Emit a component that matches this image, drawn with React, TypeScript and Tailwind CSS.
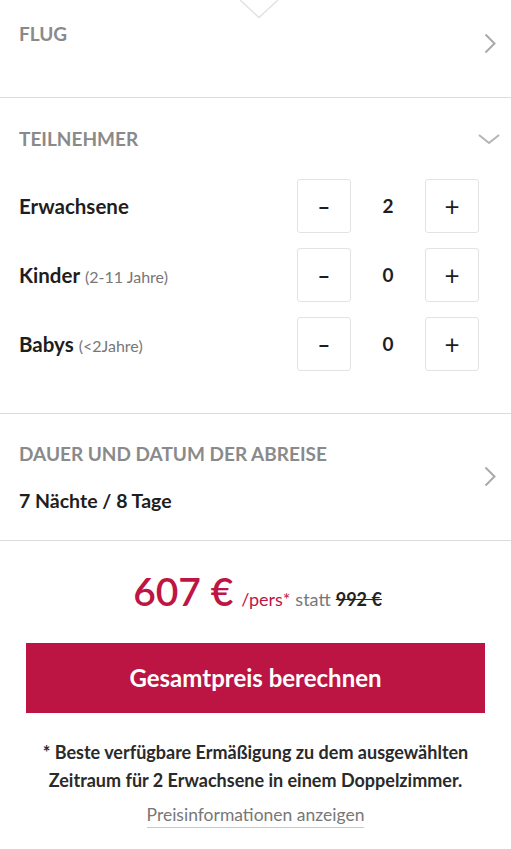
import React from "react";

const ChevronRight = () => (
  <svg width="12" height="21" viewBox="0 0 12 21" fill="none">
    <polyline points="1.5,1.5 10.5,10.5 1.5,19.5" stroke="#aaaaaa" strokeWidth="2" />
  </svg>
);

const ChevronDown = () => (
  <svg width="22" height="10" viewBox="0 0 22 10" fill="none">
    <polyline points="1,1 11,9 21,1" stroke="#b5b5b5" strokeWidth="2" />
  </svg>
);

const Counter = ({ label, sub, value }: { label: string; sub?: string; value: number }) => (
  <div className="flex items-center justify-between h-[54px]">
    <div className="text-[20.5px] font-bold text-[#1e1e1e]">
      {label}
      {sub && <span className="ml-[5px] text-[16px] font-normal text-[#777]">{sub}</span>}
    </div>
    <div className="flex items-center mr-[13px]">
      <button className="w-[54px] h-[54px] border border-[#e3e3e3] rounded-[3px] bg-white flex items-center justify-center text-[22px] font-bold text-[#1e1e1e]">
        –
      </button>
      <div className="w-[74px] text-center text-[19px] font-bold text-[#1e1e1e]">{value}</div>
      <button className="w-[54px] h-[54px] border border-[#e3e3e3] rounded-[3px] bg-white flex items-center justify-center text-[26px] font-normal text-[#1e1e1e]">
        +
      </button>
    </div>
  </div>
);

export default function App() {
  return (
    <div className="w-[511px] bg-white" style={{ fontFamily: "Lato, 'Noto Sans', sans-serif" }}>
      {/* FLUG */}
      <div className="relative h-[98px] border-b border-[#dcdcdc] pl-[19px] pr-[15px]">
        <svg className="absolute left-[239px] top-0" width="40" height="19" viewBox="0 0 40 19" fill="none">
          <polyline points="1,0 20,17.5 39,0" stroke="#e2e2e2" strokeWidth="1.5" />
        </svg>
        <div className="pt-[21px] text-[19px] font-bold text-[#8a8a8a] leading-[26px]">FLUG</div>
        <div className="absolute right-[15px] top-[33px]">
          <ChevronRight />
        </div>
      </div>

      {/* TEILNEHMER */}
      <div className="relative border-b border-[#dcdcdc] pl-[19px] pr-[19px] pt-[28px] pb-[42px]">
        <div className="flex items-center justify-between">
          <div className="text-[19px] font-bold text-[#8a8a8a] leading-[26px]">TEILNEHMER</div>
          <div className="-mr-[8px] -mt-[1px]">
            <ChevronDown />
          </div>
        </div>
        <div className="mt-[27px] flex flex-col gap-[15px]">
          <Counter label="Erwachsene" value={2} />
          <Counter label="Kinder" sub="(2-11 Jahre)" value={0} />
          <Counter label="Babys" sub="(<2Jahre)" value={0} />
        </div>
      </div>

      {/* DAUER */}
      <div className="relative h-[127px] border-b border-[#dcdcdc] pl-[19px] pr-[15px] pt-[27px]">
        <div className="text-[19px] font-bold text-[#8a8a8a] leading-[26px]">DAUER UND DATUM DER ABREISE</div>
        <div className="mt-[21px] text-[19.5px] font-bold text-[#1e1e1e] leading-[26px]">7 Nächte / 8 Tage</div>
        <div className="absolute right-[15px] top-[52px]">
          <ChevronRight />
        </div>
      </div>

      {/* PRICE */}
      <div className="px-[26px] pt-[25px] pb-[20px] flex flex-col items-center">
        <div className="flex items-baseline gap-[8px] ml-[4px]">
          <span className="text-[39px] font-semibold text-[#be1544] leading-[50px]">607 €</span>
          <span className="text-[18px] text-[#be1544]">/pers*</span>
          <span className="text-[18px] text-[#777] -ml-[3px]">statt</span>
          <span className="text-[18px] font-bold text-[#222] line-through -ml-[3px]">992 €</span>
        </div>
        <button className="mt-[27px] w-full h-[70px] bg-[#bc1543] text-white text-[24px] font-bold">
          Gesamtpreis berechnen
        </button>
        <p className="mt-[25px] text-center text-[18px] font-bold text-[#2a2a2a] leading-[28px]">
          * Beste verfügbare Ermäßigung zu dem ausgewählten
          <br />
          Zeitraum für 2 Erwachsene in einem Doppelzimmer.
        </p>
        <span className="mt-[9px] text-[17.5px] text-[#777] border-b border-[#c8c8c8] leading-[24px]">
          Preisinformationen anzeigen
        </span>
      </div>
    </div>
  );
}
